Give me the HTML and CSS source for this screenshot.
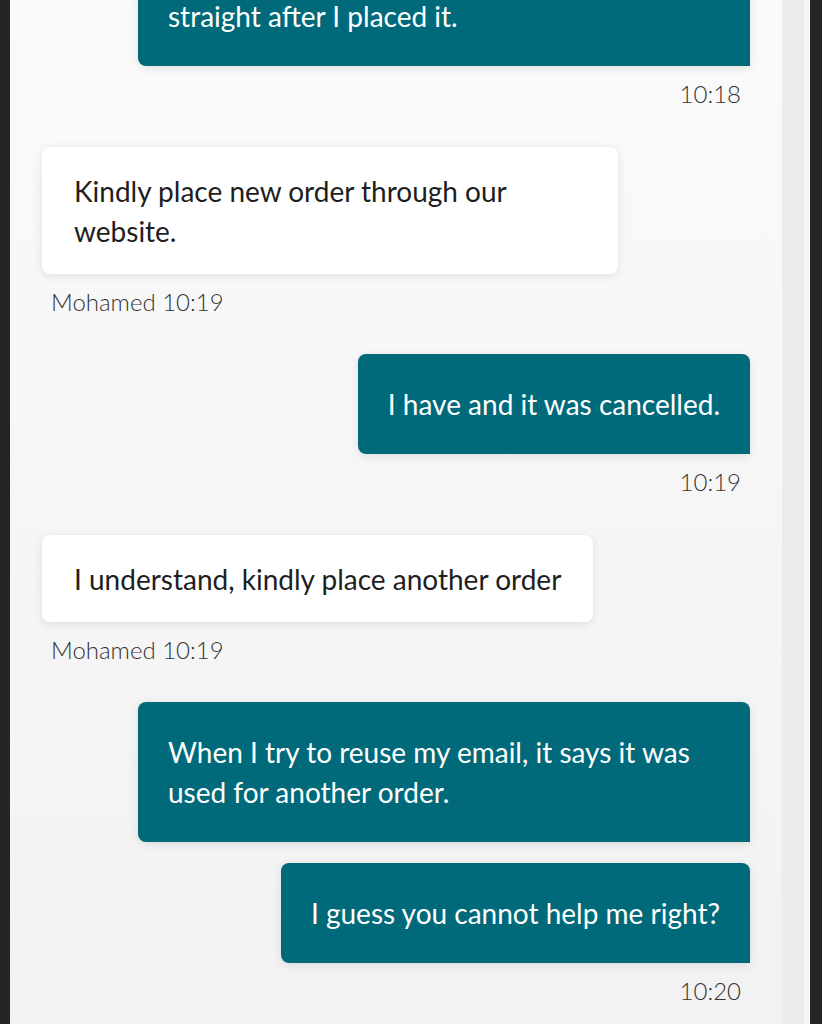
FILE: index.html
```html
<!DOCTYPE html>
<html lang="en">
<head>
<meta charset="utf-8">
<title>Chat</title>
<link rel="stylesheet" href="styles.css">
</head>
<body>
<div class="screen">
  <div class="edge-left"></div>
  <main class="chat">
    <div class="messages">
      <div class="msg out">
        <div class="bubble wide">My order was cancelled<br>straight after I placed it.</div>
        <div class="time">10:18</div>
      </div>
      <div class="msg in">
        <div class="bubble">Kindly place new order through our website.</div>
        <div class="time">Mohamed 10:19</div>
      </div>
      <div class="msg out">
        <div class="bubble">I have and it was cancelled.</div>
        <div class="time">10:19</div>
      </div>
      <div class="msg in">
        <div class="bubble">I understand, kindly place another order</div>
        <div class="time">Mohamed 10:19</div>
      </div>
      <div class="msg out">
        <div class="bubble">When I try to reuse my email, it says it was used for another order.</div>
        <div class="bubble">I guess you cannot help me right?</div>
        <div class="time">10:20</div>
      </div>
    </div>
  </main>
  <div class="scroll-track"></div>
  <div class="scroll-gutter"></div>
  <div class="edge-right"></div>
</div>
</body>
</html>
```
FILE: styles.css
```css
html, body {
  margin: 0;
  padding: 0;
  height: 100%;
  overflow: hidden;
  background: #252525;
}
.screen {
  display: flex;
  height: 1024px;
  overflow: hidden;
}
.edge-left {
  width: 10px;
  flex: none;
  background: #252525;
}
.edge-right {
  width: 12px;
  flex: none;
  background: #252525;
}
.scroll-track {
  width: 22px;
  flex: none;
  background: #ececec;
}
.scroll-gutter {
  width: 6px;
  flex: none;
  background: #f6f6f6;
}
.chat {
  flex: 1;
  padding: 0 32px;
  background: linear-gradient(#fafafa, #f2f2f2);
  overflow: hidden;
  font-family: "Lato", "Open Sans", "Liberation Sans", sans-serif;
}
.messages {
  display: flex;
  flex-direction: column;
  margin-top: -74px;
}
.msg {
  display: flex;
  flex-direction: column;
  gap: 21px;
  margin-bottom: 37.5px;
}
.msg.out { align-items: flex-end; }
.msg.in { align-items: flex-start; }
.bubble {
  font-size: 28px;
  line-height: 40px;
  box-sizing: border-box;
  box-shadow: 0 2px 10px rgba(0, 0, 0, 0.10);
}
.out .bubble {
  max-width: 612px;
  padding: 30px;
  background: #006a7a;
  color: #ffffff;
  border-radius: 8px 8px 0 8px;
}
.out .bubble.wide {
  width: 612px;
}
.in .bubble {
  max-width: 576px;
  padding: 24px 32px 23px;
  background: #ffffff;
  color: #1e1e1e;
  border-radius: 8px;
}
.time {
  margin-top: -8px;
  padding: 0 9px;
  font-size: 24px;
  line-height: 30px;
  font-weight: 300;
  color: #333333;
}
```
